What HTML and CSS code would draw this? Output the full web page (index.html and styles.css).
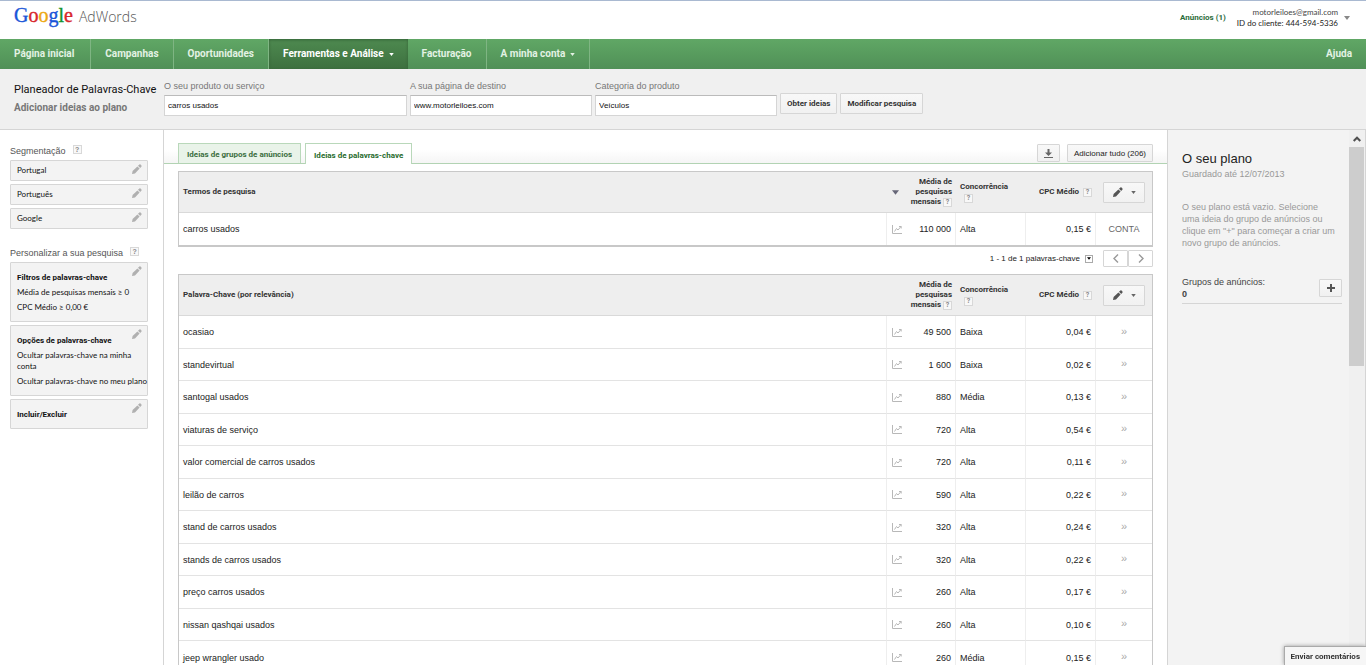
FILE: index.html
```html
<!DOCTYPE html>
<html lang="pt">
<head>
<meta charset="utf-8">
<title>Google AdWords - Planeador de Palavras-Chave</title>
<link rel="stylesheet" href="styles.css">
</head>
<body>
<svg class="defs" aria-hidden="true">
  <symbol id="pencil" viewBox="0 0 10 10"><path d="M0 10 .6 7 5.400 2.400 7.600 4.600 3 9.400zM6 1.800 7.400.5Q8 0 8.600.6L9.400 1.400Q10 2 9.500 2.600L8.200 4z"/></symbol>
  <symbol id="chart" viewBox="0 0 10 9"><path d="M.5 0V8.500H10M2.500 6.500 4.500 3.500 6 5 9 1.500M7 1.500H9.200V3.500" fill="none" stroke="currentColor"/></symbol>
  <symbol id="arrow" viewBox="0 0 6 4"><path d="M0 0H6L3 4z"/></symbol>
</svg>

<header class="top">
  <a class="logo" href="#" aria-label="Google AdWords"><span class="google"><span class="b">G</span><span class="r">o</span><span class="y">o</span><span class="b">g</span><span class="g">l</span><span class="r">e</span></span><span class="adwords">AdWords</span></a>
  <div class="account">
    <a class="alerts" href="#">Anúncios (1)</a>
    <div class="user"><span class="mail">motorleiloes@gmail.com</span><span>ID do cliente: 444-594-5336</span></div>
    <button class="bare" aria-label="Conta"><svg class="arrow"><use href="#arrow"/></svg></button>
  </div>
</header>

<nav class="nav">
  <a href="#">Página inicial</a>
  <a href="#">Campanhas</a>
  <a href="#">Oportunidades</a>
  <a href="#" class="active">Ferramentas e Análise <svg class="arrow"><use href="#arrow"/></svg></a>
  <a href="#">Facturação</a>
  <a href="#">A minha conta <svg class="arrow"><use href="#arrow"/></svg></a>
  <a href="#" class="help">Ajuda</a>
</nav>

<form class="search">
  <div class="heading"><h1>Planeador de Palavras-Chave</h1><p>Adicionar ideias ao plano</p></div>
  <div class="field wide"><label for="product">O seu produto ou serviço</label><input id="product" value="carros usados"></div>
  <div class="field"><label for="page">A sua página de destino</label><input id="page" value="www.motorleiloes.com"></div>
  <div class="field"><label for="category">Categoria do produto</label><input id="category" value="Veículos"></div>
  <button type="button" class="btn strong">Obter ideias</button>
  <button type="button" class="btn strong">Modificar pesquisa</button>
</form>

<div class="body">
  <aside class="left">
    <h2>Segmentação <span class="q">?</span></h2>
    <div class="cards">
      <button class="card single"><span>Portugal</span><svg class="pencil"><use href="#pencil"/></svg></button>
      <button class="card single"><span>Português</span><svg class="pencil"><use href="#pencil"/></svg></button>
      <button class="card single"><span>Google</span><svg class="pencil"><use href="#pencil"/></svg></button>
    </div>
    <h2 class="second">Personalizar a sua pesquisa <span class="q">?</span></h2>
    <div class="cards">
      <button class="card"><strong>Filtros de palavras-chave</strong><span>Média de pesquisas mensais ≥ 0</span><span>CPC Médio ≥ 0,00 €</span><svg class="pencil"><use href="#pencil"/></svg></button>
      <button class="card"><strong>Opções de palavras-chave</strong><span>Ocultar palavras-chave na minha<br>conta</span><span>Ocultar palavras-chave no meu plano</span><svg class="pencil"><use href="#pencil"/></svg></button>
      <button class="card"><strong>Incluir/Excluir</strong><svg class="pencil"><use href="#pencil"/></svg></button>
    </div>
  </aside>

  <main class="main">
    <div class="tabs">
      <button class="tab">Ideias de grupos de anúncios</button>
      <button class="tab on">Ideias de palavras-chave</button>
      <div class="actions">
        <button class="btn icon" aria-label="Transferir"><svg width="9" height="9" viewBox="0 0 9 9"><path d="M3.500 0h2v3.500H8L4.500 7 1 3.500h2.500zM0 8h9V9H0z" fill="#666"/></svg></button>
        <button class="btn all">Adicionar tudo (206)</button>
      </div>
    </div>
    <div class="content">
      <table class="grid">
        <colgroup><col><col class="c-vol"><col class="c-comp"><col class="c-cpc"><col class="c-act"></colgroup>
        <thead><tr>
          <th>Termos de pesquisa</th>
          <th class="vol"><div><svg class="sort"><use href="#arrow"/></svg><span>Média de<br>pesquisas<br>mensais <span class="q">?</span></span></div></th>
          <th class="comp">Concorrência <span class="q">?</span></th>
          <th class="cpc">CPC Médio <span class="q">?</span></th>
          <th class="act"><button class="btn menu" aria-label="Editar"><svg class="pencil"><use href="#pencil"/></svg><svg class="arrow"><use href="#arrow"/></svg></button></th>
        </tr></thead>
        <tbody>
          <tr><td>carros usados</td><td class="vol"><div><svg class="chart"><use href="#chart"/></svg>110 000</div></td><td>Alta</td><td class="cpc">0,15 €</td><td class="act conta">CONTA</td></tr>
        </tbody>
      </table>
      <div class="pager">
        <span>1 - 1 de 1 palavras-chave</span>
        <button class="size" aria-label="Linhas por página"><svg class="mini"><use href="#arrow"/></svg></button>
        <div class="pages">
          <button class="btn" aria-label="Anterior"><svg width="6" height="9" viewBox="0 0 6 9"><path d="M5 .5 1 4.500 5 8.500" fill="none" stroke="#999" stroke-width="1.400"/></svg></button>
          <button class="btn" aria-label="Seguinte"><svg width="6" height="9" viewBox="0 0 6 9"><path d="M1 .5 5 4.500 1 8.500" fill="none" stroke="#999" stroke-width="1.400"/></svg></button>
        </div>
      </div>
      <table class="grid">
        <colgroup><col><col class="c-vol"><col class="c-comp"><col class="c-cpc"><col class="c-act"></colgroup>
        <thead><tr>
          <th>Palavra-Chave (por relevância)</th>
          <th class="vol"><div><span>Média de<br>pesquisas<br>mensais <span class="q">?</span></span></div></th>
          <th class="comp">Concorrência <span class="q">?</span></th>
          <th class="cpc">CPC Médio <span class="q">?</span></th>
          <th class="act"><button class="btn menu" aria-label="Editar"><svg class="pencil"><use href="#pencil"/></svg><svg class="arrow"><use href="#arrow"/></svg></button></th>
        </tr></thead>
        <tbody>
          <tr><td>ocasiao</td><td class="vol"><div><svg class="chart"><use href="#chart"/></svg>49 500</div></td><td>Baixa</td><td class="cpc">0,04 €</td><td class="act add">»</td></tr>
          <tr><td>standevirtual</td><td class="vol"><div><svg class="chart"><use href="#chart"/></svg>1 600</div></td><td>Baixa</td><td class="cpc">0,02 €</td><td class="act add">»</td></tr>
          <tr><td>santogal usados</td><td class="vol"><div><svg class="chart"><use href="#chart"/></svg>880</div></td><td>Média</td><td class="cpc">0,13 €</td><td class="act add">»</td></tr>
          <tr><td>viaturas de serviço</td><td class="vol"><div><svg class="chart"><use href="#chart"/></svg>720</div></td><td>Alta</td><td class="cpc">0,54 €</td><td class="act add">»</td></tr>
          <tr><td>valor comercial de carros usados</td><td class="vol"><div><svg class="chart"><use href="#chart"/></svg>720</div></td><td>Alta</td><td class="cpc">0,11 €</td><td class="act add">»</td></tr>
          <tr><td>leilão de carros</td><td class="vol"><div><svg class="chart"><use href="#chart"/></svg>590</div></td><td>Alta</td><td class="cpc">0,22 €</td><td class="act add">»</td></tr>
          <tr><td>stand de carros usados</td><td class="vol"><div><svg class="chart"><use href="#chart"/></svg>320</div></td><td>Alta</td><td class="cpc">0,24 €</td><td class="act add">»</td></tr>
          <tr><td>stands de carros usados</td><td class="vol"><div><svg class="chart"><use href="#chart"/></svg>320</div></td><td>Alta</td><td class="cpc">0,22 €</td><td class="act add">»</td></tr>
          <tr><td>preço carros usados</td><td class="vol"><div><svg class="chart"><use href="#chart"/></svg>260</div></td><td>Alta</td><td class="cpc">0,17 €</td><td class="act add">»</td></tr>
          <tr><td>nissan qashqai usados</td><td class="vol"><div><svg class="chart"><use href="#chart"/></svg>260</div></td><td>Alta</td><td class="cpc">0,10 €</td><td class="act add">»</td></tr>
          <tr><td>jeep wrangler usado</td><td class="vol"><div><svg class="chart"><use href="#chart"/></svg>260</div></td><td>Média</td><td class="cpc">0,15 €</td><td class="act add">»</td></tr>
        </tbody>
      </table>
    </div>
  </main>

  <aside class="plan">
    <h2>O seu plano</h2>
    <p class="saved">Guardado até 12/07/2013</p>
    <p class="empty">O seu plano está vazio. Selecione uma ideia do grupo de anúncios ou clique em "+" para começar a criar um novo grupo de anúncios.</p>
    <div class="groups"><div>Grupos de anúncios:<br><b>0</b></div><button class="btn icon" aria-label="Adicionar grupo"><svg width="8" height="8" viewBox="0 0 8 8"><path d="M3 0h2v3h3v2H5v3H3V5H0V3h3z" fill="#555"/></svg></button></div>
  </aside>
  <div class="scroll"><div class="up"><svg width="8" height="6" viewBox="0 0 8 6"><path d="M.7 5 4 1.700 7.300 5" fill="none" stroke="#505050" stroke-width="2"/></svg></div><div class="thumb"></div></div>
</div>
<button class="feedback">Enviar comentários</button>
</body>
</html>
```
FILE: styles.css
```css
:root { --small: 8px/11px "Liberation Sans", Arial, sans-serif; --small-narrow: 8px/11px Lato, "Liberation Sans", sans-serif; --small-bold: bold 8px/11px Roboto, "Liberation Sans", Arial, sans-serif; }
* { box-sizing: border-box; }
body { margin: 0; height: 100vh; overflow: hidden; display: flex; flex-direction: column; font: 9px/12px "Liberation Sans", Arial, sans-serif; color: #222; background: #fff; }
h1, h2, p { margin: 0; font-weight: normal; }
button, input { font: var(--small); color: inherit; margin: 0; }
button { cursor: pointer; }
a { text-decoration: none; color: inherit; }
.defs { position: absolute; width: 0; height: 0; }
.arrow { width: 6px; height: 4px; fill: currentColor; }
.pencil { width: 10px; height: 10px; fill: #b0b0b0; }

.top { flex: none; height: 39px; border-top: 1px solid #a9b9d1; display: flex; justify-content: space-between; padding: 0 16px 0 14px; }
.logo { display: flex; align-items: baseline; gap: 6px; line-height: 28px; height: 28px; }
.google { font-family: "Liberation Serif", "Times New Roman", serif; font-size: 20px; -webkit-text-stroke: 0.4px; }
.adwords { font-family: "Open Sans", sans-serif; font-weight: 300; font-size: 14px; color: #555; }
.b { color: #1a55d8; } .r { color: #d8262c; } .y { color: #eda812; } .g { color: #12942f; }
.account { display: flex; align-items: center; height: 33px; gap: 11px; font: var(--small-narrow); }
.alerts { color: #2c6b3a; font: var(--small-bold); }
.user { display: flex; flex-direction: column; align-items: flex-end; }
.mail { color: #444; }
.bare { border: 0; padding: 0; background: none; color: #888; display: flex; margin-left: -5px; }

.nav { flex: none; height: 30px; display: flex; background: linear-gradient(#60a765, #509057); color: #e3f2e4; font: bold 10px/30px Roboto, "Liberation Sans", sans-serif; }
.nav a { padding: 0 14px; border-right: 1px solid #7fb583; display: flex; align-items: center; gap: 5px; }
.nav a:first-child { padding-right: 16px; }
.nav .arrow { width: 5px; height: 3px; }
.nav .active { color: #fff; background: linear-gradient(#4e8a50, #3d703f); box-shadow: inset 0 1px 3px #356338; border-right: 0; }
.nav .help { margin-left: auto; border: 0; }

.search { flex: none; height: 61px; display: flex; gap: 3px; padding: 11px 14px 0; background: #f0f0f0; border-bottom: 1px solid #d5d5d5; }
.heading { width: 147px; white-space: nowrap; }
.heading h1 { font: 11px/20px Roboto, "Liberation Sans", sans-serif; color: #111; }
.heading p { font: bold 10px/16px Roboto, "Liberation Sans", sans-serif; color: #777; }
.field { width: 182px; display: flex; flex-direction: column; color: #777; }
.field.wide { width: 243px; }
.field label { margin-bottom: 3px; }
.field input { width: 100%; height: 21px; padding: 0 3px; border: 1px solid #d5d5d5; border-top-color: #bbb; background: #fff; color: #111; }
.btn { border: 1px solid #d6d6d6; border-radius: 1px; background: linear-gradient(#f8f8f8, #f1f1f1); padding: 0 6px; height: 20px; display: flex; align-items: center; justify-content: center; white-space: nowrap; }
.strong { font: var(--small-bold); margin-top: 13px; height: 21px; color: #333; }

.body { flex: 1; min-height: 0; display: flex; }
.left { width: 164px; flex: none; border-right: 1px solid #d5d5d5; padding: 15px 15px 0 10px; }
.left h2 { font-size: 9px; line-height: 12px; color: #555; margin-bottom: 3px; white-space: nowrap; display: flex; gap: 7px; }
.left h2.second { margin-top: 18px; }
.q { display: inline-block; width: 9px; height: 9px; border: 1px solid #d8d8d8; background: #f8f8f8; color: #888; font-size: 7px; line-height: 7px; font-weight: bold; text-align: center; vertical-align: bottom; }
.cards { display: flex; flex-direction: column; gap: 3px; }
.card { position: relative; display: flex; flex-direction: column; align-items: flex-start; gap: 4px; border: 1px solid #d6d6d6; border-radius: 1px; background: #f3f3f3; padding: 9px 0 8px 6px; text-align: left; color: #111; width: 138px; font: var(--small-narrow); white-space: nowrap; }
.card strong { font: var(--small-bold); }
.card.single { padding: 4px 6px; height: 21px; }
.card .pencil { position: absolute; top: 3px; right: 5px; }

.main { flex: 1; min-width: 0; overflow: hidden; }
.tabs { height: 34px; display: flex; align-items: flex-end; gap: 4px; padding: 0 14px; border-bottom: 1px solid #b2d3b3; background: linear-gradient(#fff 60%, #f5f5f5); }
.tab { height: 20px; border: 1px solid #b9d8ba; border-bottom: 0; padding: 2px 8px 0; background: #e9f3e9; font: var(--small-bold); color: #3b6e40; white-space: nowrap; }
.tab.on { background: #fff; height: 21px; margin-bottom: -1px; color: #276b2d; }
.actions { margin-left: auto; display: flex; gap: 7px; height: 19px; }
.actions .btn { height: 18px; }
.btn.icon { width: 23px; height: 18px; padding: 0; flex: none; }
.btn.all { width: 86px; }
.content { padding: 7px 14px 0; }
.grid { width: 100%; table-layout: fixed; border-collapse: separate; border-spacing: 0; border: 1px solid #c8c8c8; border-bottom-width: 2px; }
.c-vol { width: 69px; } .c-comp { width: 70px; } .c-cpc { width: 70px; } .c-act { width: 56px; }
.grid th { height: 41px; padding: 0 4px; background: #eee; border-bottom: 1px solid #d9d9d9; font: var(--small-bold); line-height: 10px; text-align: left; color: #333; }
.grid td { height: 33px; padding: 0 4px; border-bottom: 1px solid #e3e3e3; border-right: 1px solid #eee; }
.grid tbody tr:nth-child(even) td, .grid tbody tr:only-child td { height: 32px; }
.grid tbody tr:last-child td { border-bottom: 0; }
.grid td:last-child { border-right: 0; }
.grid .vol { text-align: right; padding-left: 5px; }
.vol div { display: flex; align-items: center; justify-content: flex-end; }
.vol svg { margin-right: auto; flex: none; }
.chart { width: 10px; height: 9px; color: #b8b8b8; }
.sort { width: 7px; height: 5px; fill: #667; }
.grid .comp .q { display: block; margin: 2px 0 0 4px; }
.grid .cpc { text-align: right; }
.grid .cpc .q { margin-left: 2px; }
.grid .act { text-align: center; }
.grid .act.conta { color: #666; }
.grid .act.add { color: #aaa; font-size: 11px; padding-bottom: 3px; }
.btn.menu { width: 42px; height: 21px; gap: 8px; margin: 0 auto; color: #666; }
.menu .pencil { fill: #555; }
.menu .arrow { width: 5px; height: 3px; }
.pager { height: 27px; display: flex; align-items: center; justify-content: flex-end; gap: 5px; font: var(--small); padding-bottom: 4px; }
.size { width: 8px; height: 8px; padding: 0; border: 1px solid #aaa; background: #fff; display: flex; align-items: center; justify-content: center; }
.mini { width: 4px; height: 3px; }
.pages { display: flex; margin-left: 5px; }
.pages .btn { width: 25px; height: 17px; background: #fff; }

.plan { width: 182px; flex: none; border-left: 1px solid #d5d5d5; background: #f3f3f3; padding: 20px 7px 0 14px; color: #999; }
.plan h2 { font-size: 13px; line-height: 18px; color: #222; }
.empty { margin-top: 21px; max-width: 154px; }
.groups { margin-top: 27px; padding-bottom: 3px; border-bottom: 1px solid #d5d5d5; display: flex; justify-content: space-between; align-items: center; color: #444; }
.scroll { width: 17px; flex: none; background: #f0f0f0; border-right: 1px solid #d5d5d5; padding-right: 1px; }
.up { height: 17px; display: flex; align-items: center; justify-content: center; }
.thumb { height: 219px; background: #cdcdcd; }
.feedback { position: fixed; right: 0; bottom: 0; height: 19px; padding: 0 6px; border: 1px solid #aaa; border-width: 1px 0 0 1px; background: #f6f6f6; box-shadow: 0 0 4px #999; font: var(--small-bold); color: #333; white-space: nowrap; }
```
